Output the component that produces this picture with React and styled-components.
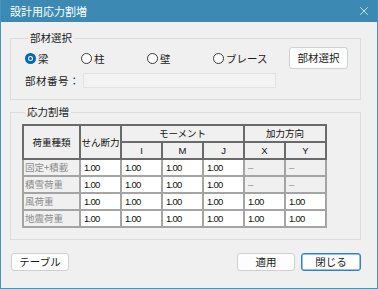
import React from "react";
import styled, { createGlobalStyle } from "styled-components";
import { X } from "lucide-react";

const GlobalStyle = createGlobalStyle`
  html, body {
    margin: 0;
    background: #ffffff;
  }
  body {
    font-family: "Noto Sans CJK JP", "Noto Sans", sans-serif;
    color: #1a1a1a;
  }
`;

const Window = styled.div`
  width: 378px;
  height: 289px;
  box-sizing: border-box;
  border: 1px solid #4593bf;
  border-top: none;
  background: #f0f0f0;
  display: flex;
  flex-direction: column;
  overflow: hidden;
`;

const TitleBar = styled.div`
  height: 22px;
  flex: none;
  background: #3c8ab4;
  color: #ffffff;
  font-size: 11px;
  display: flex;
  align-items: center;
  justify-content: space-between;
  padding: 0 6px 0 9px;
`;

const Content = styled.div`
  flex: 1;
  display: flex;
  flex-direction: column;
  padding: 9px 16px 0 9px;
`;

const Group = styled.fieldset`
  margin: ${(p) => p.$top || 0}px 0 0 0;
  padding: ${(p) => p.$pad};
  border: 1px solid #dcdcdc;
  min-width: 0;

  legend {
    font-size: 10.5px;
    line-height: 14px;
    padding: 0 2px;
    margin-left: 3px;
    color: #1a1a1a;
  }
`;

const Row = styled.div`
  display: flex;
  align-items: center;
  height: ${(p) => p.$h}px;
  margin-top: ${(p) => p.$mt || 0}px;
`;

const RadioLabel = styled.label`
  display: flex;
  align-items: center;
  gap: 2px;
  width: ${(p) => p.$w}px;
  font-size: 10.5px;
`;

const RadioCircle = styled.span`
  box-sizing: border-box;
  width: 11px;
  height: 11px;
  border-radius: 50%;
  background: #ffffff;
  border: ${(p) => (p.$on ? "3px solid #0067c0" : "1px solid #3a3a3a")};
  display: flex;
  align-items: center;
  justify-content: center;

  &::after {
    content: "";
    width: 3px;
    height: 3px;
    border-radius: 50%;
    background: ${(p) => (p.$on ? "#0067c0" : "transparent")};
  }
`;

const Button = styled.button`
  box-sizing: border-box;
  width: ${(p) => p.$w}px;
  height: ${(p) => p.$h}px;
  margin-left: ${(p) => (p.$push ? "auto" : "0")};
  background: #fdfdfd;
  border: 1px solid ${(p) => (p.$focus ? "#2c7fd2" : "#d0d0d0")};
  box-shadow: ${(p) => (p.$focus ? "inset 0 0 0 0.5px #2c7fd2" : "none")};
  border-radius: 3px;
  font-family: inherit;
  font-size: 10.5px;
  line-height: 14px;
  color: #1a1a1a;
  padding: 0;
`;

const FieldLabel = styled.span`
  width: 58px;
  font-size: 10.5px;
  letter-spacing: 0.5px;
`;

const Field = styled.div`
  box-sizing: border-box;
  width: 193px;
  height: 15px;
  background: #f3f3f3;
  border: 1px solid #e2e2e2;
`;

const Table = styled.table`
  border-collapse: collapse;
  table-layout: fixed;
  width: 303px;
  font-size: 9.5px;
`;

const Head = styled.th`
  height: 15px;
  line-height: 15px;
  padding: 0;
  font-weight: normal;
  background: #f0f0f0;
  border: 2px solid #6a6a6a;
  font-family: ${(p) =>
    p.$latin ? '"Liberation Sans", sans-serif' : "inherit"};
  color: #111111;
  white-space: nowrap;
  overflow: hidden;
`;

const Cell = styled.td`
  height: 15px;
  line-height: 15px;
  padding: 0 0 0 ${(p) => (p.$name ? 1 : 3)}px;
  border: 2px solid #a4a4a4;
  background: ${(p) => (p.$off ? "#f0f0f0" : "#ffffff")};
  color: ${(p) => (p.$off ? "#8c8c8c" : "#111111")};
  font-family: ${(p) =>
    p.$name ? "inherit" : '"Liberation Sans", sans-serif'};
  letter-spacing: ${(p) => (p.$name ? "0" : "-0.7px")};
  white-space: nowrap;
  overflow: hidden;
`;

const Footer = styled.div`
  display: flex;
  align-items: center;
  gap: 6px;
  margin: 13px 0 0 1px;
`;

const radios = [
  { label: "梁", w: 56, on: true },
  { label: "柱", w: 66 },
  { label: "壁", w: 66 },
  { label: "ブレース", w: 60 },
];

const rows = [
  { name: "固定+積載", xy: false },
  { name: "積雪荷重", xy: false },
  { name: "風荷重", xy: true },
  { name: "地震荷重", xy: true },
];

const colWidths = [57, 41, 41, 41, 41, 41, 41];

export default function App() {
  return (
    <>
      <GlobalStyle />
      <Window>
        <TitleBar>
          <span>設計用応力割増</span>
          <X size={14} strokeWidth={1.2} color="#ffffff" />
        </TitleBar>
        <Content>
          <Group $pad="0 12px 11px 14px">
            <legend>部材選択</legend>
            <Row $h={22} $mt={2}>
              {radios.map((r) => (
                <RadioLabel key={r.label} $w={r.w}>
                  <RadioCircle $on={r.on} />
                  {r.label}
                </RadioLabel>
              ))}
              <Button $w={59} $h={22} $push>
                部材選択
              </Button>
            </Row>
            <Row $h={15} $mt={4}>
              <FieldLabel>部材番号：</FieldLabel>
              <Field />
            </Row>
          </Group>
          <Group $top={5} $pad="5px 11px 11px 11px">
            <legend>応力割増</legend>
            <Table>
              <colgroup>
                {colWidths.map((w, i) => (
                  <col key={i} width={w} />
                ))}
              </colgroup>
              <thead>
                <tr>
                  <Head rowSpan={2}>荷重種類</Head>
                  <Head rowSpan={2}>せん断力</Head>
                  <Head colSpan={3}>モーメント</Head>
                  <Head colSpan={2}>加力方向</Head>
                </tr>
                <tr>
                  <Head $latin>I</Head>
                  <Head $latin>M</Head>
                  <Head $latin>J</Head>
                  <Head $latin>X</Head>
                  <Head $latin>Y</Head>
                </tr>
              </thead>
              <tbody>
                {rows.map((r) => (
                  <tr key={r.name}>
                    <Cell $name $off>
                      {r.name}
                    </Cell>
                    <Cell>1.00</Cell>
                    <Cell>1.00</Cell>
                    <Cell>1.00</Cell>
                    <Cell>1.00</Cell>
                    <Cell $off={!r.xy}>{r.xy ? "1.00" : "–"}</Cell>
                    <Cell $off={!r.xy}>{r.xy ? "1.00" : "–"}</Cell>
                  </tr>
                ))}
              </tbody>
            </Table>
          </Group>
          <Footer>
            <Button $w={58} $h={18}>
              テーブル
            </Button>
            <Button $w={58} $h={18} $push>
              適用
            </Button>
            <Button $w={60} $h={18} $focus>
              閉じる
            </Button>
          </Footer>
        </Content>
      </Window>
    </>
  );
}
